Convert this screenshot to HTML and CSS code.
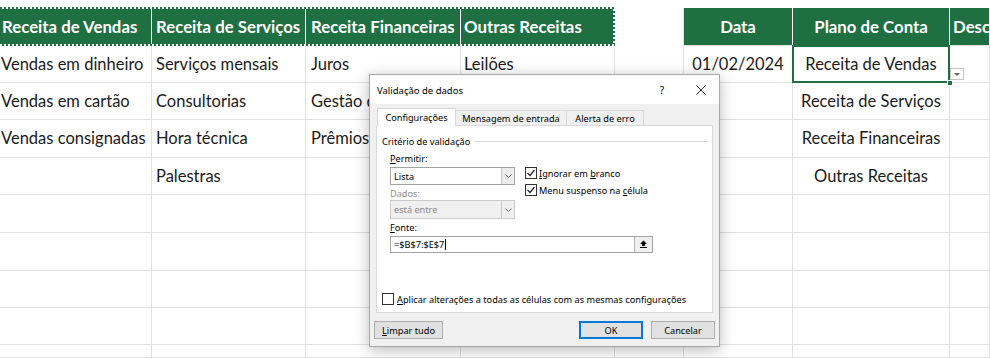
FILE: index.html
```html
<!DOCTYPE html>
<html lang="pt-BR">
<head>
<meta charset="utf-8">
<title>Validação de dados</title>
<link rel="stylesheet" href="styles.css">
</head>
<body>
<div class="app">
  <div class="sheet">
    <div class="c h first">Receita de Vendas</div>
    <div class="c h">Receita de Serviços</div>
    <div class="c h pad-c">Receita Financeiras</div>
    <div class="c h pad-d">Outras Receitas</div>
    <div class="c gap-h"></div>
    <div class="c h ctr">Data</div>
    <div class="c h ctr">Plano de Conta</div>
    <div class="c h last">Descrição</div>

    <div class="c first">Vendas em dinheiro</div>
    <div class="c">Serviços mensais</div>
    <div class="c pad-c">Juros</div>
    <div class="c pad-d">Leilões</div>
    <div class="c"></div>
    <div class="c ctr">01/02/2024</div>
    <div class="c ctr sel">Receita de Vendas<span class="handle"></span><span class="dd"></span></div>
    <div class="c"></div>

    <div class="c first">Vendas em cartão</div>
    <div class="c">Consultorias</div>
    <div class="c pad-c">Gestão de ativos</div>
    <div class="c"></div>
    <div class="c"></div>
    <div class="c"></div>
    <div class="c ctr">Receita de Serviços</div>
    <div class="c"></div>

    <div class="c first">Vendas consignadas</div>
    <div class="c">Hora técnica</div>
    <div class="c pad-c">Prêmios</div>
    <div class="c"></div>
    <div class="c"></div>
    <div class="c"></div>
    <div class="c ctr">Receita Financeiras</div>
    <div class="c"></div>

    <div class="c first"></div>
    <div class="c">Palestras</div>
    <div class="c"></div>
    <div class="c"></div>
    <div class="c"></div>
    <div class="c"></div>
    <div class="c ctr">Outras Receitas</div>
    <div class="c"></div>

    <div class="c"></div><div class="c"></div><div class="c"></div><div class="c"></div><div class="c"></div><div class="c"></div><div class="c"></div><div class="c"></div>
    <div class="c"></div><div class="c"></div><div class="c"></div><div class="c"></div><div class="c"></div><div class="c"></div><div class="c"></div><div class="c"></div>
    <div class="c"></div><div class="c"></div><div class="c"></div><div class="c"></div><div class="c"></div><div class="c"></div><div class="c"></div><div class="c"></div>
    <div class="c"></div><div class="c"></div><div class="c"></div><div class="c"></div><div class="c"></div><div class="c"></div><div class="c"></div><div class="c"></div>
    <div class="c"></div><div class="c"></div><div class="c"></div><div class="c"></div><div class="c"></div><div class="c"></div><div class="c"></div><div class="c"></div>
  </div>

  <div class="marquee"></div>

  <div class="dialog">
    <div class="titlebar">
      <span class="title">Validação de dados</span>
      <span class="help">?</span>
      <svg class="close" width="10" height="10" viewBox="0 0 10 10"><path d="M0.5 0.5 L9.5 9.5 M9.5 0.5 L0.5 9.5" stroke="#333" stroke-width="1" fill="none"/></svg>
    </div>
    <div class="dbody">
      <div class="tabs">
        <div class="tab active">Configurações</div>
        <div class="tab t2">Mensagem de entrada</div>
        <div class="tab t3">Alerta de erro</div>
      </div>
      <div class="panel">
        <div class="legend"><span>Critério de validação</span><span class="rule"></span></div>
        <div class="crit">
          <div class="top">
            <div class="lcol">
              <div class="lbl"><u>P</u>ermitir:</div>
              <div class="select"><span class="val">Lista</span><span class="arrow"><svg width="7" height="4" viewBox="0 0 7 4"><polyline points="0.5,0.5 3.5,3.5 6.5,0.5" stroke="#666" stroke-width="1" fill="none"/></svg></span></div>
              <div class="lbl dis">Dados:</div>
              <div class="select disabled"><span class="val">está entre</span><span class="arrow"><svg width="7" height="4" viewBox="0 0 7 4"><polyline points="0.5,0.5 3.5,3.5 6.5,0.5" stroke="#777" stroke-width="1" fill="none"/></svg></span></div>
            </div>
            <div class="rcol">
              <div class="cbrow"><span class="cb"><svg width="10" height="10" viewBox="0 0 10 10"><polyline points="1.5,5 4,7.5 8.5,2" stroke="#222" stroke-width="1.2" fill="none"/></svg></span><span><u>I</u>gnorar em <u>b</u>ranco</span></div>
              <div class="cbrow second"><span class="cb"><svg width="10" height="10" viewBox="0 0 10 10"><polyline points="1.5,5 4,7.5 8.5,2" stroke="#222" stroke-width="1.2" fill="none"/></svg></span><span>Menu suspenso na <u>c</u>élula</span></div>
            </div>
          </div>
          <div class="lbl fonte-lbl"><u>F</u>onte:</div>
          <div class="input"><span class="val">=$B$7:$E$7<span class="caret"></span></span><span class="refbtn"><svg width="9" height="9" viewBox="0 0 9 9"><polygon points="4.5,0.5 8,4 6,4 6,6 3,6 3,4 1,4" fill="#000"/><rect x="1" y="7" width="7" height="1" fill="#000"/></svg></span></div>
        </div>
        <div class="cbrow apply"><span class="cb"></span><span><u>A</u>plicar alterações a todas as células com as mesmas configurações</span></div>
      </div>
      <div class="buttons">
        <div class="btn limpar"><span><u>L</u>impar tudo</span></div>
        <span class="spacer"></span>
        <div class="btn ok">OK</div>
        <div class="btn cancel">Cancelar</div>
      </div>
    </div>
  </div>
</div>
</body>
</html>
```

FILE: styles.css
```css
* { box-sizing: border-box; }
html, body { margin: 0; padding: 0; }
body {
  width: 990px;
  height: 358px;
  overflow: hidden;
  background: #fff;
  font-family: Lato, "Noto Sans", sans-serif;
}
.app {
  position: relative;
  width: 990px;
  height: 358px;
  overflow: hidden;
}

/* spreadsheet */
.sheet {
  display: grid;
  grid-template-columns: 152px 154px 155px 154px 69px 109px 157px 1fr;
  grid-template-rows: 38px 37px 37px 38px 37px 38px 38px 37px 37px 1fr;
  padding-top: 8px;
  height: 358px;
  font-size: 16.5px;
  color: #1b1b1b;
}
.c {
  border-right: 1px solid #e1e1e1;
  border-bottom: 1px solid #e1e1e1;
  display: flex;
  align-items: center;
  padding-left: 4px;
  padding-bottom: 1px;
  white-space: nowrap;
  overflow: hidden;
}
.first { padding-left: 1px; }
.pad-c { padding-left: 5px; }
.pad-d { padding-left: 3px; }
.h {
  background: #1e6f41;
  color: #fff;
  font-weight: 700;
  font-size: 16.8px;
  border-right-color: #fff;
  padding-bottom: 1px;
}
.h.first { padding-left: 2px; }
.last { padding-left: 3px; }
.ctr { justify-content: center; padding-left: 0; }
.gap-h { border-bottom: none; }

.sel {
  position: relative;
  overflow: visible;
  z-index: 2;
}
.sel::after {
  content: "";
  position: absolute;
  left: -1px; top: -1px; right: -1px; bottom: -1px;
  border: 2px solid #1e6f41;
  pointer-events: none;
}
.handle {
  position: absolute;
  right: -4px;
  bottom: -4px;
  width: 6px;
  height: 6px;
  background: #1e6f41;
  border: 1px solid #fff;
  z-index: 3;
}
.dd {
  position: absolute;
  left: 100%;
  top: 22px;
  width: 14px;
  height: 12px;
  margin-left: 1px;
  border: 1px solid #c6c6c6;
  background: #fff;
  display: flex;
  align-items: center;
  justify-content: center;
}
.dd::after {
  content: "";
  border-left: 3px solid transparent;
  border-right: 3px solid transparent;
  border-top: 3px solid #666;
}

/* copy marquee over the header */
.marquee {
  position: absolute;
  left: 0;
  top: 7px;
  width: 615px;
  height: 39px;
  pointer-events: none;
  background:
    repeating-linear-gradient(90deg, #1e6f41 0 2px, #fff 2px 4px) top left / 100% 2px no-repeat,
    repeating-linear-gradient(90deg, #fff 0 2px, #1e6f41 2px 4px) bottom left / 100% 2px no-repeat,
    repeating-linear-gradient(180deg, #1e6f41 0 2px, #fff 2px 4px) top right / 2px 100% no-repeat;
}

/* dialog */
.dialog {
  position: absolute;
  left: 369px;
  top: 74px;
  width: 351px;
  height: 273px;
  background: #f0f0f0;
  border: 1px solid #a8a8a8;
  box-shadow: 0 3px 14px rgba(0, 0, 0, 0.28);
  font-family: "Noto Sans", "Open Sans", sans-serif;
  font-size: 9.2px;
  color: #000;
  display: flex;
  flex-direction: column;
  z-index: 10;
}
.titlebar {
  height: 29px;
  background: #fff;
  display: flex;
  align-items: center;
  padding-left: 7px;
  padding-top: 1px;
  font-size: 9.5px;
}
.title { flex: 1; }
.help { margin-right: 32px; font-size: 10px; }
.close { margin-right: 13px; }

.dbody {
  flex: 1;
  padding: 4px 6px 0 6px;
  display: flex;
  flex-direction: column;
}
.tabs {
  display: flex;
  align-items: flex-end;
  height: 18px;
  padding-left: 1px;
  margin-bottom: -1px;
  position: relative;
  z-index: 1;
}
.tab {
  height: 16px;
  border: 1px solid #d9d9d9;
  background: #f0f0f0;
  display: flex;
  align-items: center;
  justify-content: center;
  white-space: nowrap;
}
.tab.active {
  width: 79px;
  height: 18px;
  background: #fff;
  border-bottom: none;
  padding-bottom: 1px;
}
.tab.t2 { width: 112px; margin-left: -1px; }
.tab.t3 { width: 78px; margin-left: -1px; }

.panel {
  height: 188px;
  background: #fff;
  border: 1px solid #d9d9d9;
  display: flex;
  flex-direction: column;
}
.legend {
  margin-top: 8px;
  height: 14px;
  display: flex;
  align-items: center;
  padding-left: 5px;
  padding-right: 4px;
}
.legend .rule {
  flex: 1;
  height: 1px;
  background: #dcdcdc;
  margin-left: 4px;
}
.crit { padding-left: 13px; }
.top {
  display: flex;
  gap: 10px;
  margin-top: 5px;
}
.lcol {
  width: 125px;
  display: flex;
  flex-direction: column;
}
.lbl {
  height: 12px;
  line-height: 12px;
}
.lbl.dis { margin-top: 3px; color: #8d8d8d; }
.select {
  height: 18px;
  margin-top: 2px;
  border: 1px solid #a3a3a3;
  background: #fff;
  display: flex;
}
.select.disabled {
  height: 19px;
  margin-top: 0;
  background: #f0f0f0;
  border-color: #cbcbcb;
  color: #8a8a8a;
}
.val {
  flex: 1;
  padding-left: 3px;
  display: flex;
  align-items: center;
}
.arrow {
  width: 13px;
  border-left: 1px solid #c9c9c9;
  background: #ececec;
  display: flex;
  align-items: center;
  justify-content: center;
}
.select.disabled .arrow { background: #f0f0f0; }

.rcol { padding-top: 14px; }
.cbrow {
  display: flex;
  align-items: center;
  height: 12px;
  gap: 2px;
  white-space: nowrap;
}
.cbrow.second { margin-top: 5px; }
.cb {
  width: 12px;
  height: 12px;
  border: 1px solid #333;
  background: #fff;
  display: flex;
  align-items: center;
  justify-content: center;
  flex: none;
}
.fonte-lbl { margin-top: 3px; }
.input {
  width: 263px;
  height: 17px;
  margin-top: 2px;
  border: 1px solid #a3a3a3;
  background: #fff;
  display: flex;
}
.caret {
  display: inline-block;
  width: 1px;
  height: 11px;
  background: #000;
  margin-left: 1px;
}
.refbtn {
  width: 18px;
  border-left: 1px solid #b5b5b5;
  background: #f0f0f0;
  display: flex;
  align-items: center;
  justify-content: center;
}
.apply {
  margin-top: auto;
  margin-bottom: 7px;
  padding-left: 5px;
  gap: 3px;
}

.buttons {
  display: flex;
  margin: 8px -2px 0 -2px;
}
.spacer { flex: 1; }
.btn {
  height: 18px;
  border: 1px solid #adadad;
  background: #e1e1e1;
  display: flex;
  align-items: center;
  justify-content: center;
  white-space: nowrap;
}
.limpar { width: 69px; }
.ok {
  width: 64px;
  border-color: #0078d7;
  box-shadow: inset 0 0 0 1px #0078d7;
}
.cancel { width: 64px; margin-left: 8px; }
```
